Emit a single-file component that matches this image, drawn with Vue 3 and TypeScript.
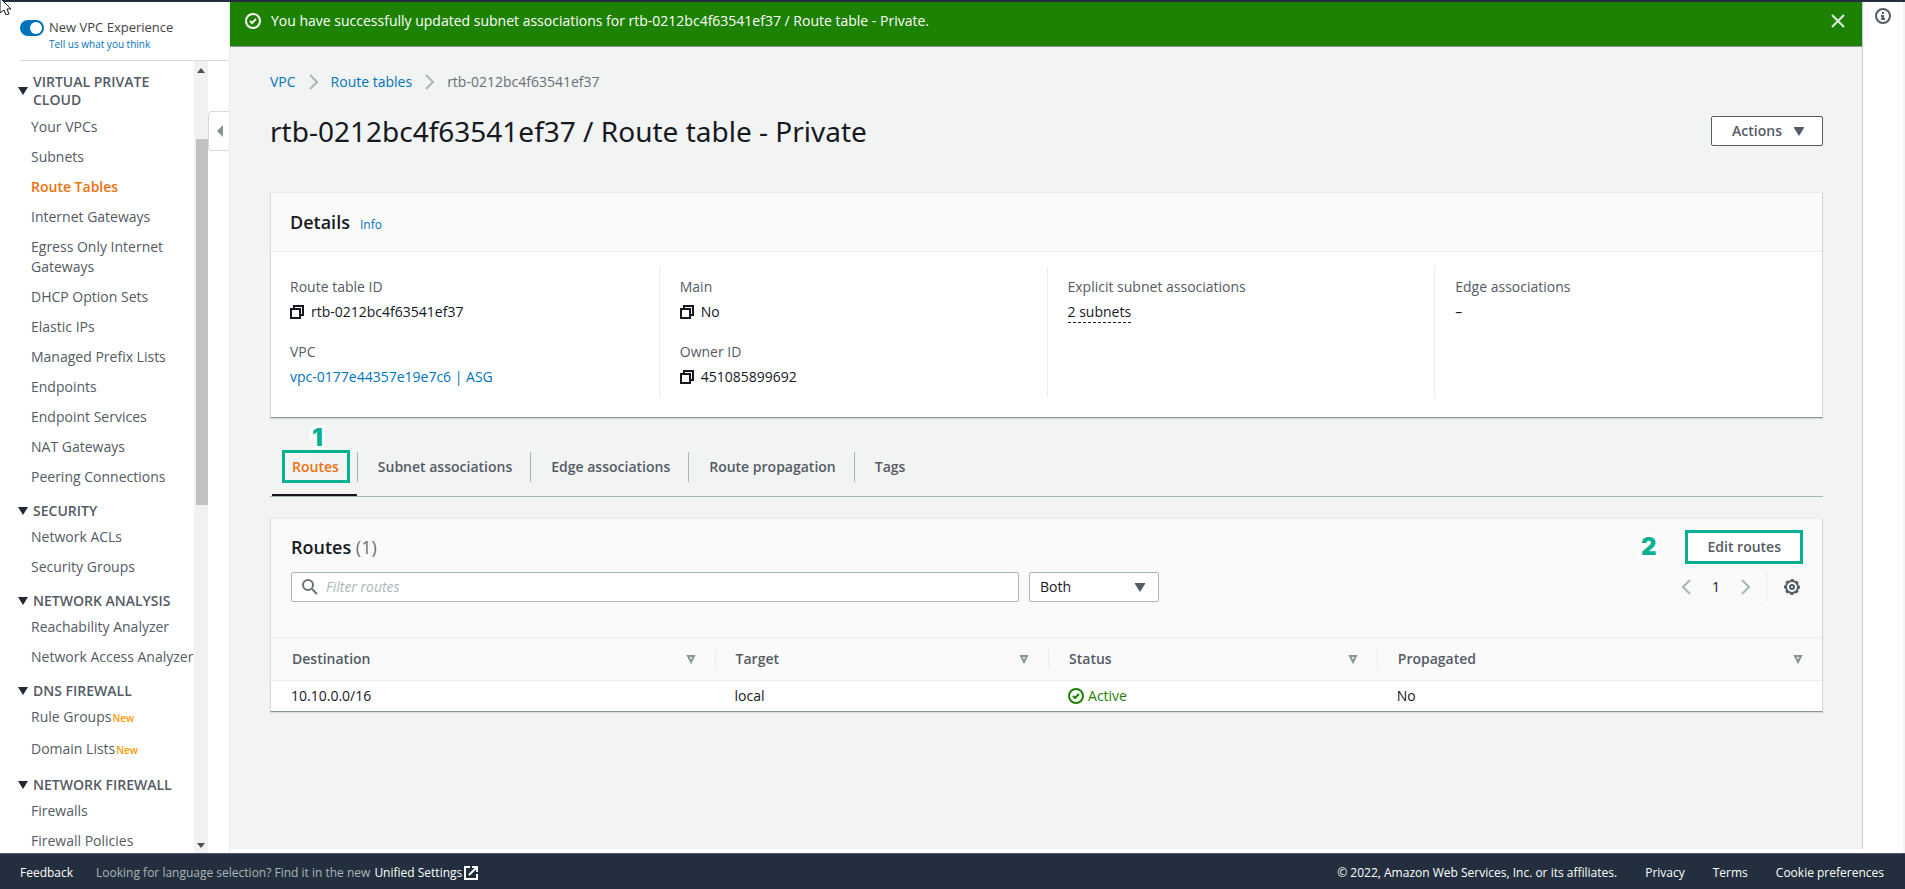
<script setup lang="ts">
import { ref } from 'vue'

interface NavLink {
  label: string
  isNew?: boolean
}
interface NavGroup {
  title: string
  links: NavLink[]
}

const toLinks = (...labels: string[]): NavLink[] => labels.map((label) => ({ label }))

const groups: NavGroup[] = [
  {
    title: 'VIRTUAL PRIVATE CLOUD',
    links: toLinks(
      'Your VPCs',
      'Subnets',
      'Route Tables',
      'Internet Gateways',
      'Egress Only Internet Gateways',
      'DHCP Option Sets',
      'Elastic IPs',
      'Managed Prefix Lists',
      'Endpoints',
      'Endpoint Services',
      'NAT Gateways',
      'Peering Connections',
    ),
  },
  { title: 'SECURITY', links: toLinks('Network ACLs', 'Security Groups') },
  { title: 'NETWORK ANALYSIS', links: toLinks('Reachability Analyzer', 'Network Access Analyzer') },
  {
    title: 'DNS FIREWALL',
    links: [
      { label: 'Rule Groups', isNew: true },
      { label: 'Domain Lists', isNew: true },
    ],
  },
  { title: 'NETWORK FIREWALL', links: toLinks('Firewalls', 'Firewall Policies') },
]

const currentPage = 'Route Tables'
const newExperience = ref(true)
const tabs = ['Routes', 'Subnet associations', 'Edge associations', 'Route propagation', 'Tags']
const activeTab = ref('Routes')
const filterText = ref('')
const scope = ref('Both')
const columns = ['Destination', 'Target', 'Status', 'Propagated']
const routes = [{ destination: '10.10.0.0/16', target: 'local', status: 'Active', propagated: 'No' }]
</script>

<template>
  <div class="console">
    <div class="workspace">
      <aside class="sidebar">
        <div class="experience">
          <input id="new-experience" v-model="newExperience" class="switch" type="checkbox" role="switch" />
          <div class="experience-text">
            <label for="new-experience">New VPC Experience</label>
            <a href="#">Tell us what you think</a>
          </div>
        </div>
        <div class="nav-area">
          <nav class="nav" aria-label="VPC">
            <section v-for="group in groups" :key="group.title" class="nav-group">
              <h2>
                <svg width="10" height="8" viewBox="0 0 10 8" aria-hidden="true"><path d="M0 0h10L5 8z" fill="#232a33" /></svg>
                <span>{{ group.title }}</span>
              </h2>
              <ul>
                <li v-for="link in group.links" :key="link.label" :class="{ tagged: link.isNew }">
                  <a href="#" :class="{ current: link.label === currentPage }">{{ link.label }}</a>
                  <span v-if="link.isNew" class="new">New</span>
                </li>
              </ul>
            </section>
          </nav>
          <div class="scrollbar" aria-hidden="true">
            <svg width="8" height="5" viewBox="0 0 8 5"><path d="M0 5h8L4 0z" fill="#505050" /></svg>
            <div class="track"><div class="thumb"></div></div>
            <svg width="8" height="5" viewBox="0 0 8 5"><path d="M0 0h8L4 5z" fill="#505050" /></svg>
          </div>
          <div class="gutter">
            <button class="collapse" type="button" aria-label="Collapse navigation">
              <svg width="6" height="12" viewBox="0 0 6 12"><path d="M6 0v12L0 6z" fill="#879191" /></svg>
            </button>
          </div>
        </div>
      </aside>

      <main class="content">
        <div class="flash" role="status">
          <svg width="16" height="16" viewBox="0 0 16 16" fill="none" stroke="#fff" stroke-width="2" aria-hidden="true">
            <circle cx="8" cy="8" r="7" /><path d="M5 8l2 2 4-4" />
          </svg>
          <span>You have successfully updated subnet associations for rtb-0212bc4f63541ef37 / Route table - Private.</span>
          <button type="button" aria-label="Dismiss">
            <svg width="14" height="14" viewBox="0 0 14 14" fill="none" stroke="#e0eedf" stroke-width="2"><path d="M1 1l12 12M13 1L1 13" /></svg>
          </button>
        </div>

        <div class="page">
          <nav class="breadcrumb" aria-label="Breadcrumb">
            <a href="#">VPC</a>
            <svg width="9" height="16" viewBox="0 0 9 16" fill="none" stroke="#aab7b8" stroke-width="2"><path d="M1 1l7 7-7 7" /></svg>
            <a href="#">Route tables</a>
            <svg width="9" height="16" viewBox="0 0 9 16" fill="none" stroke="#aab7b8" stroke-width="2"><path d="M1 1l7 7-7 7" /></svg>
            <span>rtb-0212bc4f63541ef37</span>
          </nav>

          <header class="title">
            <h1>rtb-0212bc4f63541ef37 / Route table - Private</h1>
            <button type="button">
              Actions
              <svg width="10" height="9" viewBox="0 0 10 9" aria-hidden="true"><path d="M0 0h10v1L5 9 0 1z" fill="#545b64" /></svg>
            </button>
          </header>

          <section class="panel">
            <div class="details-head">
              <h2>Details</h2>
              <a href="#">Info</a>
            </div>
            <div class="details-grid">
              <dl>
                <dt>Route table ID</dt>
                <dd>
                  <svg class="copy" width="14" height="14" viewBox="0 0 14 14"><path d="M1 4h9v9H1zM4 4V1h9v9h-3" /></svg>
                  rtb-0212bc4f63541ef37
                </dd>
                <dt>VPC</dt>
                <dd><a href="#">vpc-0177e44357e19e7c6 | ASG</a></dd>
              </dl>
              <dl>
                <dt>Main</dt>
                <dd>
                  <svg class="copy" width="14" height="14" viewBox="0 0 14 14"><path d="M1 4h9v9H1zM4 4V1h9v9h-3" /></svg>
                  No
                </dd>
                <dt>Owner ID</dt>
                <dd>
                  <svg class="copy" width="14" height="14" viewBox="0 0 14 14"><path d="M1 4h9v9H1zM4 4V1h9v9h-3" /></svg>
                  451085899692
                </dd>
              </dl>
              <dl>
                <dt>Explicit subnet associations</dt>
                <dd><button class="popover" type="button">2 subnets</button></dd>
              </dl>
              <dl>
                <dt>Edge associations</dt>
                <dd>–</dd>
              </dl>
            </div>
          </section>

          <div class="tabs" role="tablist">
            <div v-for="tab in tabs" :key="tab" class="tab-cell">
              <button
                type="button"
                role="tab"
                :aria-selected="tab === activeTab"
                :class="['tab', { active: tab === activeTab }]"
                @click="activeTab = tab"
              >{{ tab }}</button>
              <div v-if="tab === 'Routes'" class="marker"><span class="step">1</span></div>
            </div>
          </div>

          <section class="panel routes">
            <div class="routes-head">
              <h2>Routes <span>(1)</span></h2>
              <div class="edit">
                <span class="step">2</span>
                <button type="button">Edit routes</button>
              </div>
            </div>
            <div class="toolbar">
              <div class="search">
                <svg width="16" height="16" viewBox="0 0 16 16" fill="none" stroke="#687078" stroke-width="2" aria-hidden="true">
                  <circle cx="6" cy="6" r="5" /><path d="M10 10l5 5" />
                </svg>
                <input v-model="filterText" type="text" placeholder="Filter routes" aria-label="Filter routes" />
              </div>
              <div class="select">
                <select v-model="scope" aria-label="Route scope">
                  <option>Both</option>
                </select>
                <svg width="10" height="9" viewBox="0 0 10 9" aria-hidden="true"><path d="M0 0h10v1L5 9 0 1z" fill="#545b64" /></svg>
              </div>
              <div class="pager">
                <button type="button" aria-label="Previous page">
                  <svg width="9" height="16" viewBox="0 0 9 16" fill="none" stroke="#aab7b8" stroke-width="2"><path d="M8 1L1 8l7 7" /></svg>
                </button>
                <button type="button" class="number">1</button>
                <button type="button" aria-label="Next page">
                  <svg width="9" height="16" viewBox="0 0 9 16" fill="none" stroke="#aab7b8" stroke-width="2"><path d="M1 1l7 7-7 7" /></svg>
                </button>
                <button type="button" class="settings" aria-label="Preferences">
                  <svg width="16" height="16" viewBox="0 0 16 16" fill="none" stroke="#545b64" stroke-width="2">
                    <circle cx="8" cy="8" r="6" />
                    <circle cx="8" cy="8" r="7" stroke-dasharray="3 2.498" stroke-dashoffset="1.5" />
                    <circle cx="8" cy="8" r="2" />
                  </svg>
                </button>
              </div>
            </div>
            <table>
              <thead>
                <tr>
                  <th v-for="column in columns" :key="column" scope="col">
                    <div class="th">
                      <span>{{ column }}</span>
                      <svg width="10" height="9" viewBox="0 0 10 9" fill="none" stroke="#879596" stroke-width="2" aria-hidden="true"><path d="M2 1h6L5 7z" /></svg>
                    </div>
                  </th>
                </tr>
              </thead>
              <tbody>
                <tr v-for="route in routes" :key="route.destination">
                  <td>{{ route.destination }}</td>
                  <td>{{ route.target }}</td>
                  <td>
                    <span class="status">
                      <svg width="16" height="16" viewBox="0 0 16 16" fill="none" stroke="#1d8102" stroke-width="2" aria-hidden="true">
                        <circle cx="8" cy="8" r="7" /><path d="M5 8l2 2 4-4" />
                      </svg>
                      {{ route.status }}
                    </span>
                  </td>
                  <td>{{ route.propagated }}</td>
                </tr>
              </tbody>
            </table>
          </section>
        </div>
      </main>

      <aside class="help">
        <button type="button" aria-label="Open help panel">
          <svg width="16" height="16" viewBox="0 0 16 16" fill="none" stroke="#545b64" stroke-width="2">
            <circle cx="8" cy="8" r="7" /><path d="M7 5h2M6 8h2v3M6 11h4" />
          </svg>
        </button>
      </aside>
    </div>

    <footer class="footer">
      <a href="#">Feedback</a>
      <p>
        Looking for language selection? Find it in the new
        <a href="#">Unified Settings
          <svg width="14" height="14" viewBox="0 0 14 14" fill="none" stroke="#fff" stroke-width="2" aria-hidden="true"><path d="M6 1H1v12h12V8M8 1h5v5M13 1L5 9" /></svg>
        </a>
      </p>
      <div class="legal">
        <span>© 2022, Amazon Web Services, Inc. or its affiliates.</span>
        <a href="#">Privacy</a>
        <a href="#">Terms</a>
        <a href="#">Cookie preferences</a>
      </div>
    </footer>

    <svg class="pointer" width="12" height="15" viewBox="0 0 12 15" aria-hidden="true">
      <path d="M0 -2L11 9H7l2 5-3 1-2-5-4 3z" fill="#fff" stroke="#16191f" />
    </svg>
  </div>
</template>

<style>
body {
  margin: 0;
}
</style>

<style scoped>
.console {
  display: flex;
  flex-direction: column;
  height: 100vh;
  box-sizing: border-box;
  border-top: 2px solid #232f3e;
  background: #fff;
  color: #16191f;
  font: 14px/20px "Open Sans", "Noto Sans", sans-serif;
  overflow: hidden;
}
.console *,
.console *::before {
  box-sizing: border-box;
}
svg {
  display: block;
  flex: none;
}
button {
  margin: 0;
  padding: 0;
  border: 0;
  background: none;
  color: inherit;
  font: inherit;
  cursor: pointer;
}
a {
  color: #0073bb;
  text-decoration: none;
}
h1,
h2,
p,
ul,
dl,
dd {
  margin: 0;
  padding: 0;
}
ul {
  list-style: none;
}
.workspace {
  display: flex;
  flex: 1;
  min-height: 0;
}

/* Navigation */
.sidebar {
  display: flex;
  flex-direction: column;
  width: 230px;
  flex: none;
  border-right: 1px solid #eaeded;
}
.experience {
  display: flex;
  gap: 5px;
  height: 59px;
  margin-left: 20px;
  padding-top: 15px;
  border-bottom: 1px solid #d5dbdb;
}
.switch {
  appearance: none;
  flex: none;
  width: 24px;
  height: 16px;
  margin: 3px 0 0;
  padding: 2px;
  border-radius: 8px;
  background: #ccc;
}
.switch::before {
  content: "";
  display: block;
  width: 12px;
  height: 12px;
  border-radius: 50%;
  background: #fff;
}
.switch:checked {
  padding-left: 10px;
  background: #0073bb;
}
.experience-text {
  display: flex;
  flex-direction: column;
  color: #444;
  font-size: 13px;
}
.experience-text a {
  font-size: 10px;
  line-height: 14px;
}
.nav-area {
  display: flex;
  flex: 1;
  min-height: 0;
}
.nav {
  flex: 1;
  min-width: 0;
  padding-top: 12px;
  overflow: hidden;
}
.nav-group h2 {
  display: flex;
  align-items: center;
  gap: 5px;
  margin: 10px 20px 2px 18px;
  color: #545b64;
  font-size: 14px;
  font-weight: 600;
  line-height: 18px;
}
.nav-group:first-child h2 {
  margin-top: 0;
  margin-bottom: 3px;
}
.nav-group li {
  padding: 5px 0 5px 31px;
}
.nav-group li.tagged {
  padding-bottom: 7px;
}
.nav-group a {
  color: #545b64;
}
.nav-group a.current {
  color: #ec7211;
  font-weight: 600;
}
.new {
  margin-left: 1px;
  color: #ff9900;
  font-size: 10px;
  font-weight: 600;
  line-height: 14px;
}
.scrollbar {
  display: flex;
  flex-direction: column;
  align-items: center;
  width: 14px;
  flex: none;
  padding: 7px 0 5px;
  background: #f1f1f1;
}
.track {
  flex: 1;
  width: 12px;
  margin-left: 2px;
  padding-top: 66px;
}
.thumb {
  height: 52%;
  background: #c1c1c1;
}
.gutter {
  width: 21px;
  flex: none;
  padding-top: 50px;
}
.collapse {
  display: flex;
  align-items: center;
  width: 21px;
  height: 40px;
  padding-left: 8px;
  border: 1px solid #d5dbdb;
  border-right: 0;
  border-radius: 4px 0 0 4px;
}

/* Main column */
.content {
  flex: 1;
  min-width: 0;
  margin-bottom: 4px;
  border-right: 1px solid #c8cfcf;
  background: #f2f3f3;
}
.flash {
  display: flex;
  align-items: center;
  gap: 10px;
  height: 45px;
  padding: 0 17px 7px 15px;
  border-bottom: 1px solid #879596;
  background: #1d8102;
  color: #fff;
  font-weight: 500;
}
.flash button {
  margin-left: auto;
}
.page {
  padding: 25px 39px 0 40px;
}
.breadcrumb {
  display: flex;
  align-items: center;
  gap: 13px;
  color: #687078;
}
.title {
  display: flex;
  align-items: center;
  justify-content: space-between;
  margin: 20px 0 42px;
}
.title h1 {
  font-family: "Noto Sans", "Open Sans", sans-serif;
  font-size: 28px;
  font-weight: 400;
  line-height: 38px;
}
.title button {
  display: flex;
  align-items: center;
  gap: 12px;
  height: 30px;
  padding: 0 18px 0 20px;
  border: 1px solid #545b64;
  border-radius: 2px;
  background: #fff;
  color: #545b64;
  font-weight: 600;
}
.panel {
  border: 1px solid #eaeded;
  border-left-color: #d5dbdb;
  border-right-color: #d5dbdb;
  border-bottom: 1px solid #879596;
  background: #fff;
  box-shadow: 0 1px 1px #d5dbdb;
}
.details-head {
  display: flex;
  align-items: baseline;
  gap: 10px;
  height: 59px;
  padding: 18px 19px 0;
  border-bottom: 1px solid #eaeded;
  background: #fafafa;
}
.details-head a {
  font-size: 12px;
  font-weight: 500;
}
.panel h2 {
  font-size: 18px;
  font-weight: 600;
  line-height: 22px;
}
.details-grid {
  display: grid;
  grid-template-columns: repeat(4, 1fr);
  padding: 15px 0 20px;
}
.details-grid dl {
  height: 130px;
  padding: 10px 20px 0;
  border-left: 1px solid #eaeded;
}
.details-grid dl:first-child {
  padding-left: 18px;
  border-left-color: transparent;
}
.details-grid dt {
  color: #545b64;
}
.details-grid dd {
  display: flex;
  align-items: center;
  gap: 7px;
  height: 20px;
  margin: 5px 0 20px;
}
.copy {
  fill: none;
  stroke: #16191f;
  stroke-width: 2;
}
.popover {
  border-bottom: 1px dashed #16191f;
}

/* Tabs */
.tabs {
  display: flex;
  margin-bottom: 21px;
  padding: 34px 0 0 2px;
  border-bottom: 1px solid #aab7b8;
}
.tab-cell {
  position: relative;
  padding-bottom: 14px;
}
.tab-cell + .tab-cell .tab {
  border-left: 1px solid #aab7b8;
}
.tab {
  height: 30px;
  padding: 0 18px 0 20px;
  color: #545b64;
  font-weight: 600;
}
.tab.active {
  color: #ec7211;
}
.tab-cell:has(.active) {
  padding-bottom: 12px;
  border-bottom: 2px solid #16191f;
}
.marker {
  position: absolute;
  top: -2px;
  right: 7px;
  left: 10px;
  height: 33px;
  border: 3px solid #08b092;
  pointer-events: none;
}
.step {
  color: #08b092;
  font-family: Inter, "Open Sans", sans-serif;
  font-size: 24px;
  font-weight: 900;
  line-height: 24px;
  -webkit-text-stroke: 6px #fff;
  paint-order: stroke fill;
}
.marker .step {
  position: absolute;
  bottom: 30px;
  left: 27px;
}

/* Routes */
.routes {
  background: #fafafa;
}
.routes-head {
  display: flex;
  align-items: center;
  justify-content: space-between;
  padding: 11px 19px 8px 20px;
}
.routes-head h2 span {
  color: #687078;
  font-weight: 400;
}
.edit {
  display: flex;
  align-items: center;
  gap: 29px;
}
.edit button {
  height: 34px;
  padding: 0 19px;
  border: 3px solid #08b092;
  background: #fff;
  color: #545b64;
  font-weight: 600;
}
.toolbar {
  display: flex;
  gap: 10px;
  padding: 0 22px 35px 20px;
}
.search {
  display: flex;
  align-items: center;
  gap: 8px;
  flex: 0 1 728px;
  height: 30px;
  padding: 0 9px 0 10px;
  border: 1px solid #aab7b8;
  border-radius: 2px;
  background: #fff;
}
.search input {
  flex: 1;
  min-width: 0;
  padding: 0;
  border: 0;
  outline: 0;
  background: none;
  font: inherit;
}
.search input::placeholder {
  color: #aab7b8;
  font-style: italic;
}
.select {
  display: grid;
  align-items: center;
  width: 130px;
  height: 30px;
}
.select > * {
  grid-area: 1 / 1;
}
.select select {
  appearance: none;
  width: 100%;
  height: 30px;
  padding: 0 10px;
  border: 1px solid #aab7b8;
  border-radius: 2px;
  background: #fff;
  color: #16191f;
  font: inherit;
}
.select svg {
  justify-self: end;
  margin-right: 14px;
  pointer-events: none;
}
.pager {
  display: flex;
  align-items: center;
  gap: 21px;
  margin-left: auto;
}
.pager .number {
  font-weight: 500;
}
.pager .settings {
  display: flex;
  align-items: center;
  height: 30px;
  margin-left: -5px;
  padding-left: 17px;
  border-left: 1px solid #eaeded;
}
table {
  width: 100%;
  border-collapse: collapse;
  table-layout: fixed;
}
th {
  padding: 0;
  border-top: 1px solid #eaeded;
  border-bottom: 1px solid #eaeded;
  color: #545b64;
  font-weight: 600;
  text-align: left;
}
th:nth-child(1) {
  width: 28.6%;
}
th:nth-child(2) {
  width: 21.5%;
}
th:nth-child(3) {
  width: 21.2%;
}
.th {
  display: flex;
  align-items: center;
  justify-content: space-between;
  margin: 11px 0;
  padding: 0 19px 0 20px;
  border-left: 1px solid #eaeded;
}
th:first-child .th {
  border-left-color: transparent;
}
td {
  height: 30px;
  padding: 0 20px;
  background: #fff;
}
.status {
  display: flex;
  align-items: center;
  gap: 4px;
  color: #1d8102;
}

/* Help rail */
.help {
  width: 42px;
  flex: none;
  padding: 6px 0 0 12px;
  border-right: 2px solid #f2f3f3;
}

/* Footer */
.footer {
  display: flex;
  align-items: center;
  height: 36px;
  flex: none;
  padding: 3px 21px 0 20px;
  border-top: 1px solid #545b64;
  background: #232f3e;
  color: #aab7b8;
  font-size: 12px;
  white-space: nowrap;
}
.footer a,
.legal {
  color: #fff;
  font-weight: 500;
}
.footer p {
  display: flex;
  gap: 4px;
  margin-left: 23px;
}
.footer p a {
  display: flex;
  align-items: center;
  gap: 2px;
}
.legal {
  display: flex;
  gap: 28px;
  margin-left: auto;
}

.pointer {
  position: absolute;
  top: 0;
  left: 0;
}
</style>
